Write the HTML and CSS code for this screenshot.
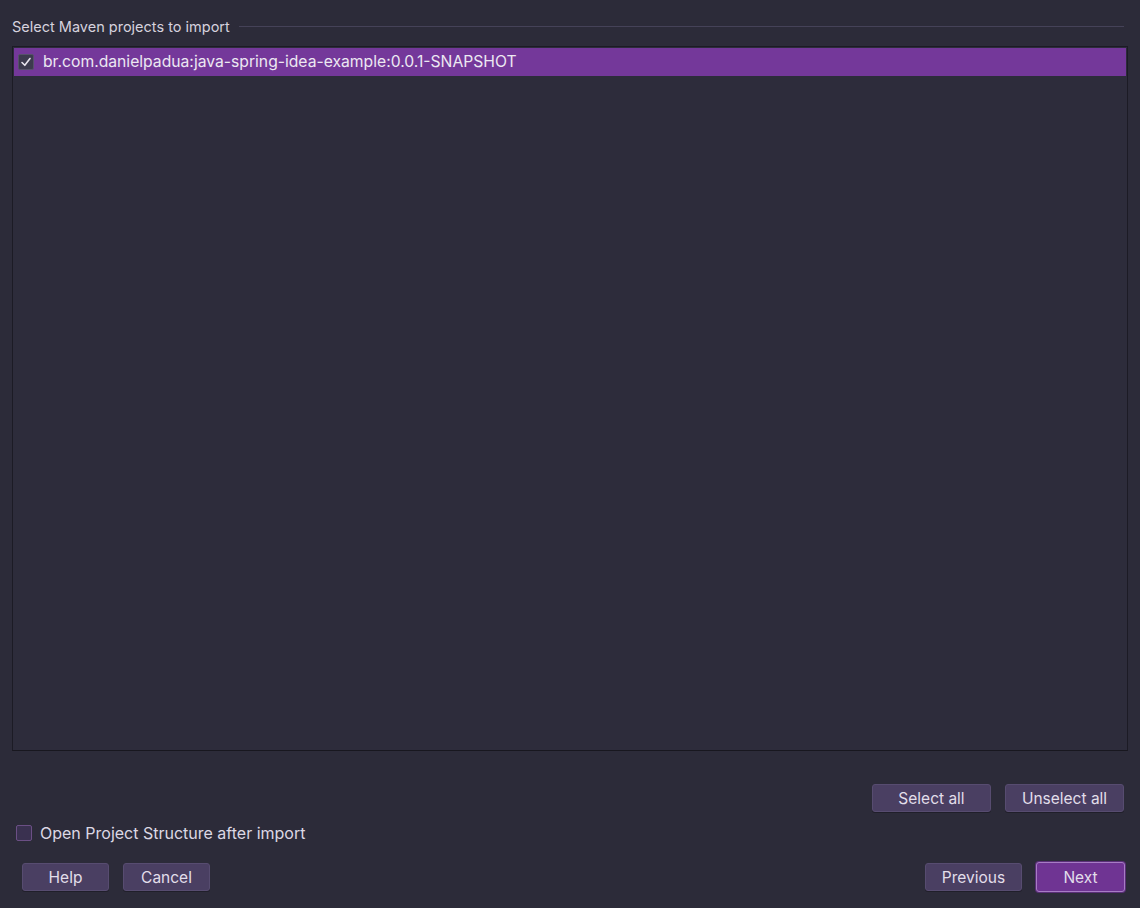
FILE: index.html
```html
<!DOCTYPE html>
<html lang="en">
<head>
    <meta charset="UTF-8">
    <title>Import Project</title>
    <link rel="stylesheet" href="styles.css">
</head>
<body>
    <div class="dialog">
        <div class="section-title">
            <span>Select Maven projects to import</span>
            <div class="section-line"></div>
        </div>

        <!-- Danh sach project -->
        <div class="project-list">
            <div class="project-row selected">
                <span class="check checked">
                    <svg width="12" height="12" viewBox="0 0 12 12"><path d="M2 6.5 L4.8 9.3 L10 2.5" fill="none" stroke="#e8e4ee" stroke-width="1.6" stroke-linecap="round" stroke-linejoin="round"/></svg>
                </span>
                <span class="project-name">br.com.danielpadua:java-spring-idea-example:0.0.1-SNAPSHOT</span>
            </div>
        </div>

        <div class="select-buttons">
            <button class="btn btn-select">Select all</button>
            <button class="btn btn-unselect">Unselect all</button>
        </div>

        <label class="option-row">
            <span class="check"></span>
            <span>Open Project Structure after import</span>
        </label>

        <div class="footer">
            <div class="footer-left">
                <button class="btn btn-help">Help</button>
                <button class="btn btn-cancel">Cancel</button>
            </div>
            <div class="footer-right">
                <button class="btn btn-prev">Previous</button>
                <button class="btn btn-next">Next</button>
            </div>
        </div>
    </div>
</body>
</html>
```
FILE: styles.css
```css
html, body {
    margin: 0;
    height: 100%;
}
body {
    background: #2c2b39;
    font-family: Inter, 'Noto Sans', sans-serif;
    color: #dcd8e4;
}
.dialog {
    height: 908px;
    box-sizing: border-box;
    padding: 17px 12px 16px 12px;
    display: flex;
    flex-direction: column;
}
.section-title {
    display: flex;
    align-items: center;
    height: 20px;
    font-size: 14.5px;
    color: #d6d2de;
}
.section-line {
    flex: 1;
    height: 1px;
    margin: 0 4px 0 9px;
    background: #454258;
}
.project-list {
    margin-top: 9px;
    height: 706px;
    box-sizing: border-box;
    border: 1px solid #1c1b25;
    border-bottom-color: #18171f;
    background: #2d2c3b;
    padding: 1px;
}
.project-row {
    height: 28px;
    display: flex;
    align-items: center;
    padding-left: 4px;
    font-size: 15.7px;
}
.project-row.selected {
    background: #74389a;
    color: #ece8f2;
}
.check {
    width: 14px;
    height: 14px;
    border: 1px solid #6b4f85;
    background: #3a3150;
    border-radius: 2px;
    display: inline-flex;
    align-items: center;
    justify-content: center;
    flex-shrink: 0;
}
.check.checked {
    background: #3c3a4e;
    border-color: #56526a;
}
.project-name {
    margin-left: 9px;
}
.select-buttons {
    display: flex;
    justify-content: flex-end;
    gap: 14px;
    margin-top: 33px;
    padding-right: 4px;
}
.btn {
    height: 28px;
    box-sizing: border-box;
    border: 1px solid #574c70;
    background: #4a3f62;
    color: #e2deea;
    border-radius: 3px;
    font-family: Inter, 'Noto Sans', sans-serif;
    font-size: 15.5px;
    padding: 0;
    box-shadow: 0 1px 0 #201f2a;
}
.btn-select, .btn-unselect {
    width: 119px;
}
.option-row {
    display: flex;
    align-items: center;
    margin-top: 11px;
    padding-left: 4px;
    font-size: 16px;
    color: #dcd8e4;
}
.option-row .check {
    margin-right: 8px;
}
.footer {
    display: flex;
    justify-content: space-between;
    align-items: center;
    margin-top: 19px;
    padding: 0 3px 0 10px;
}
.footer-left, .footer-right {
    display: flex;
    gap: 14px;
    align-items: center;
}
.btn-help {
    width: 87px;
}
.btn-cancel {
    width: 87px;
}
.btn-prev {
    width: 97px;
}
.btn-next {
    width: 89px;
    height: 30px;
    background: #6f3493;
    border: 1px solid #a77cc4;
    box-shadow: 0 0 0 1px #5a2f78;
}
```
